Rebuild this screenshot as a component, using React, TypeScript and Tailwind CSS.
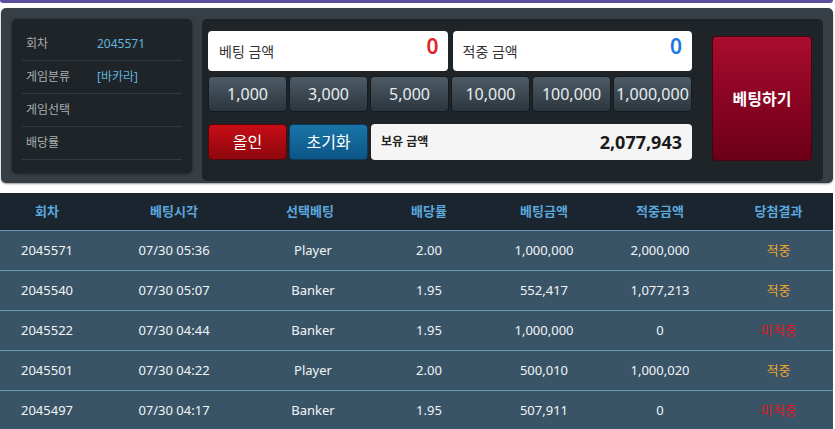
import React from 'react';

const FONT = '"Noto Sans", "Noto Sans CJK KR", sans-serif';

const infoRows = [
  { label: '회차', value: '2045571' },
  { label: '게임분류', value: '[바카라]' },
  { label: '게임선택', value: '' },
  { label: '배당률', value: '' },
];

const chips = ['1,000', '3,000', '5,000', '10,000', '100,000', '1,000,000'];

const history = [
  { round: '2045571', time: '07/30 05:36', pick: 'Player', odds: '2.00', bet: '1,000,000', win: '2,000,000', hit: true },
  { round: '2045540', time: '07/30 05:07', pick: 'Banker', odds: '1.95', bet: '552,417', win: '1,077,213', hit: true },
  { round: '2045522', time: '07/30 04:44', pick: 'Banker', odds: '1.95', bet: '1,000,000', win: '0', hit: false },
  { round: '2045501', time: '07/30 04:22', pick: 'Player', odds: '2.00', bet: '500,010', win: '1,000,020', hit: true },
  { round: '2045497', time: '07/30 04:17', pick: 'Banker', odds: '1.95', bet: '507,911', win: '0', hit: false },
];

const cols = 'grid grid-cols-[94px_160px_112px_126px_104px_128px_1fr]';

const App = () => {
  return (
    <div className="w-[833px] bg-white text-white" style={{ fontFamily: FONT }}>
      <div className="h-[3px] bg-[#5b4e9c] rounded-b-[3px]" />

      {/* betting panel */}
      <div className="mt-[5px] ml-[1px] w-[832px] h-[175px] bg-[#363f46] rounded-[5px] shadow-[0_1px_2px_rgba(0,0,0,0.4)] flex gap-[10px] pl-[11px] pr-[10px] pt-[11px]">
        <div className="w-[180px] h-[154px] bg-[#1e2427] rounded-[5px] px-[10px] pt-[9px] shadow-[0_1px_3px_rgba(0,0,0,0.5)]">
          {infoRows.map((r) => (
            <div key={r.label} className="flex items-center h-[33px] border-b border-[#343b3f]">
              <span className="w-[75px] pl-[4px] text-[12px] text-[#a9aeb1]">{r.label}</span>
              <span className="text-[12px] text-[#62b3df]">{r.value}</span>
            </div>
          ))}
        </div>

        <div className="flex-1 h-[162px] bg-[#1e2427] rounded-[5px] flex pl-[6px] pr-[11px] pt-[12px]">
          <div className="w-[484px] flex flex-col">
            <div className="flex gap-[5px] h-[40px]">
              <div className="flex-1 bg-white rounded-[4px] flex items-center justify-between pl-[11px] pr-[9px]">
                <span className="text-[14px] text-[#333]">베팅 금액</span>
                <span className="text-[21px] font-semibold text-[#e2232a] -mt-[9px]">0</span>
              </div>
              <div className="flex-1 bg-white rounded-[4px] flex items-center justify-between pl-[10px] pr-[10px]">
                <span className="text-[14px] text-[#333]">적중 금액</span>
                <span className="text-[21px] font-semibold text-[#1d79e0] -mt-[9px]">0</span>
              </div>
            </div>

            <div className="mt-[5px] flex gap-[2px] h-[36px]">
              {chips.map((c) => (
                <button
                  key={c}
                  className="flex-1 rounded-[4px] border border-[#161b1e] bg-gradient-to-b from-[#4d5b66] to-[#2c363e] text-[16px] text-[#e8ecee]"
                >
                  {c}
                </button>
              ))}
            </div>

            <div className="mt-[12px] flex gap-[2px] h-[36px]">
              <button className="w-[79px] rounded-[4px] border border-[#5a0508] bg-gradient-to-b from-[#c80d16] to-[#8e070d] text-[16px] text-white">
                올인
              </button>
              <button className="w-[79px] rounded-[4px] border border-[#0a3a58] bg-gradient-to-b from-[#1a75a8] to-[#0c5686] text-[16px] text-white">
                초기화
              </button>
              <div className="ml-[1px] flex-1 bg-[#f5f5f5] rounded-[4px] flex items-center justify-between pl-[10px] pr-[10px]">
                <span className="text-[12px] font-bold text-[#222]">보유 금액</span>
                <span className="text-[18px] font-bold text-[#1a1a1a]">2,077,943</span>
              </div>
            </div>
          </div>

          <div className="ml-auto pt-[5px]">
            <button className="w-[100px] h-[125px] rounded-[4px] border border-[#4a0010] bg-gradient-to-b from-[#aa0d2e] to-[#6c0018] text-[16px] font-bold text-white">
              베팅하기
            </button>
          </div>
        </div>
      </div>

      {/* bet history */}
      <div className="mt-[10px]">
        <div className={`${cols} h-[37px] bg-[#1b2530] items-center text-center text-[13px] font-bold text-[#5ba8dd]`}>
          <span>회차</span>
          <span>베팅시각</span>
          <span>선택베팅</span>
          <span>배당률</span>
          <span>베팅금액</span>
          <span>적중금액</span>
          <span>당첨결과</span>
        </div>
        {history.map((h) => (
          <div
            key={h.round}
            className={`${cols} h-[40px] bg-[#3a5467] border-t border-[#6b95ae] items-center text-center text-[13px] text-[#f2f4f6]`}
          >
            <span>{h.round}</span>
            <span>{h.time}</span>
            <span className="pl-[6px]">{h.pick}</span>
            <span>{h.odds}</span>
            <span>{h.bet}</span>
            <span>{h.win}</span>
            <span className={h.hit ? 'text-[#f0a526]' : 'text-[#e0141e]'}>{h.hit ? '적중' : '미적중'}</span>
          </div>
        ))}
      </div>
    </div>
  );
};

export default App;
